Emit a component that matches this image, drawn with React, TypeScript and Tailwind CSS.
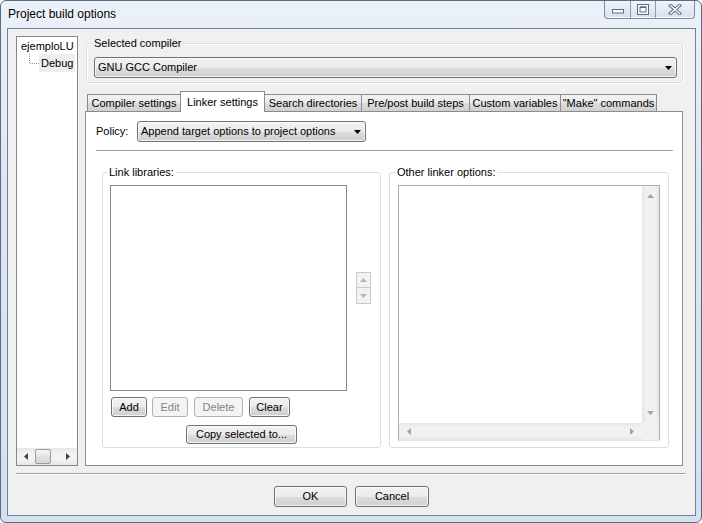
import clsx from "clsx";

// Win7 button face, reused by buttons and read-only combos
const face =
  "border border-[#707070] rounded-[3px] bg-[linear-gradient(#f2f2f2_0%,#ebebeb_50%,#dddddd_51%,#cfcfcf_100%)] shadow-[inset_0_0_0_1px_rgba(255,255,255,0.75)]";

type Dir = "up" | "down" | "left" | "right";

function Tri({ dir, className }: { dir: Dir; className?: string }) {
  const vertical = dir === "up" || dir === "down";
  const pts = {
    down: "0,0 7,0 3.5,4",
    up: "0,4 7,4 3.5,0",
    left: "4,0 4,7 0,3.5",
    right: "0,0 0,7 4,3.5",
  }[dir];
  return (
    <svg
      width={vertical ? 7 : 4}
      height={vertical ? 4 : 7}
      viewBox={vertical ? "0 0 7 4" : "0 0 4 7"}
      className={className}
    >
      <polygon points={pts} fill="currentColor" />
    </svg>
  );
}

function Btn({
  children,
  className,
  disabled,
}: {
  children: React.ReactNode;
  className?: string;
  disabled?: boolean;
}) {
  return (
    <div
      className={clsx(
        "flex items-center justify-center whitespace-nowrap",
        disabled
          ? "border border-[#adb2b5] rounded-[3px] bg-[#f4f4f4] text-[#838383]"
          : face,
        className
      )}
    >
      {children}
    </div>
  );
}

function Combo({ text, className }: { text: string; className?: string }) {
  return (
    <div className={clsx(face, "flex items-center h-[21px] pl-[3px] pr-[4px]", className)}>
      <span className="flex-1 whitespace-nowrap overflow-hidden">{text}</span>
      <Tri dir="down" className="text-black" />
    </div>
  );
}

function Tab({
  label,
  className,
}: {
  label: string;
  className?: string;
}) {
  return (
    <div
      className={clsx(
        "h-[17px] flex items-center justify-center whitespace-nowrap border-t border-[#898c95] bg-[linear-gradient(#f2f2f2_0%,#ebebeb_50%,#dddddd_51%,#cfcfcf_100%)]",
        className
      )}
    >
      {label}
    </div>
  );
}

function TitleControls() {
  return (
    <div className="mr-[6px] flex h-[18px] w-[91px] rounded-b-[4px] border border-t-0 border-[#7d8ca0] bg-[linear-gradient(#f1f5fb_0%,#e3ebf5_50%,#d6e1ee_100%)] shadow-[inset_0_-1px_0_rgba(255,255,255,0.8)]">
      <div className="w-[25px] flex items-end justify-center pb-[4px]">
        <svg width="12" height="5" viewBox="0 0 12 5">
          <rect x="0.5" y="0.5" width="11" height="3.5" fill="#fff" stroke="#5f6c7e" />
        </svg>
      </div>
      <div className="w-[25px] border-l border-[#8d9cb0] flex items-center justify-center">
        <svg width="12" height="11" viewBox="0 0 12 11">
          <rect x="0.5" y="0.5" width="11" height="10" fill="#fff" stroke="#5f6c7e" />
          <rect x="3" y="3" width="6" height="5" fill="none" stroke="#5f6c7e" />
          <rect x="3" y="2.5" width="6" height="1.5" fill="#5f6c7e" />
        </svg>
      </div>
      <div className="flex-1 border-l border-[#8d9cb0] flex items-center justify-center">
        <svg width="14" height="11" viewBox="0 0 14 11">
          <path d="M2.5 1.5 L11.5 9.5 M11.5 1.5 L2.5 9.5" stroke="#5f6c7e" strokeWidth="3.4" strokeLinecap="square" />
          <path d="M2.5 1.5 L11.5 9.5 M11.5 1.5 L2.5 9.5" stroke="#fff" strokeWidth="1.4" strokeLinecap="square" />
        </svg>
      </div>
    </div>
  );
}

function TreePanel() {
  return (
    <div className="w-[62px] h-[430px] border border-[#828790] bg-white flex flex-col">
      <div className="pt-[1px]">
        <div className="h-[16px] pl-[4px] flex items-center whitespace-nowrap">ejemploLU</div>
        <div className="h-[18px] flex items-stretch">
          <svg width="22" height="18" viewBox="0 0 22 18" className="shrink-0">
            <path d="M12.5 0 V9.5 H22" fill="none" stroke="#9a9a9a" strokeDasharray="1 1" />
          </svg>
          <div className="w-[36px] pl-[2px] bg-[#eeeeee] flex items-center">Debug</div>
        </div>
      </div>
      <div className="flex-1" />
      <div className="h-[17px] bg-[linear-gradient(#e6e6e6,#f2f2f2_30%,#f2f2f2_70%,#e6e6e6)] flex items-center">
        <div className="w-[17px] flex justify-center text-[#404040]">
          <Tri dir="left" />
        </div>
        <div className="ml-[1px] w-[16px] h-[15px] rounded-[2px] border border-[#9b9b9b] bg-[linear-gradient(#f6f6f6,#e2e2e2_50%,#d6d6d6)]" />
        <div className="flex-1 flex justify-center pl-[8px] text-[#404040]">
          <Tri dir="right" />
        </div>
      </div>
    </div>
  );
}

function LinkLibraries() {
  return (
    <fieldset className="w-[279px] border border-[#d5dfe5] rounded-[3px] pl-[7px] pr-[7px] pb-[3px]">
      <legend className="ml-[-3px] px-[2px] leading-[14px]">Link libraries:</legend>
      <div className="mt-[6px] flex items-center">
        <div className="w-[237px] h-[206px] border border-[#828790] bg-white" />
        <div className="ml-[9px] flex flex-col">
          <div className="w-[15px] h-[16px] border border-[#c9c9c9] bg-[#f2f2f2] flex items-center justify-center text-[#b5b5b5]">
            <Tri dir="up" />
          </div>
          <div className="w-[15px] h-[16px] border border-t-0 border-[#c9c9c9] bg-[#f2f2f2] flex items-center justify-center text-[#b5b5b5]">
            <Tri dir="down" />
          </div>
        </div>
      </div>
      <div className="mt-[6px] ml-[1px] flex h-[20px]">
        <Btn className="w-[36px]">Add</Btn>
        <Btn className="w-[36px] ml-[5px]" disabled>
          Edit
        </Btn>
        <Btn className="w-[49px] ml-[6px]" disabled>
          Delete
        </Btn>
        <Btn className="w-[41px] ml-[6px]">Clear</Btn>
      </div>
      <div className="mt-[8px] flex justify-center">
        <Btn className="w-[111px] h-[19px]">Copy selected to...</Btn>
      </div>
    </fieldset>
  );
}

function OtherLinker() {
  return (
    <fieldset className="w-[280px] border border-[#d5dfe5] rounded-[3px] pl-[8px] pb-[6px]">
      <legend className="ml-[-3px] px-[2px] leading-[14px]">Other linker options:</legend>
      <div className="mt-[6px] w-[262px] h-[256px] border border-[#abadb3] border-b-[#e3e9ef] bg-white grid grid-cols-[1fr_17px] grid-rows-[1fr_17px]">
        <div className="bg-white" />
        <div className="bg-[linear-gradient(90deg,#e6e6e6,#f1f1f1_25%,#f1f1f1_75%,#e6e6e6)] flex flex-col items-center justify-between py-[8px] text-[#a3a3a3]">
          <Tri dir="up" />
          <Tri dir="down" />
        </div>
        <div className="bg-[linear-gradient(#e6e6e6,#f1f1f1_25%,#f1f1f1_75%,#e6e6e6)] flex items-center justify-between px-[8px] text-[#a3a3a3]">
          <Tri dir="left" />
          <Tri dir="right" />
        </div>
        <div className="bg-[#f0f0f0]" />
      </div>
    </fieldset>
  );
}

function LinkerPanel() {
  return (
    <div className="h-[355px] border border-[#898c95] bg-white flex flex-col">
      <div className="mt-[9px] ml-[10px] flex items-center h-[21px]">
        <span className="w-[41px]">Policy:</span>
        <Combo className="w-[229px]" text="Append target options to project options" />
      </div>
      <div className="mt-[8px] ml-[10px] mr-[9px] h-px bg-[#a0a0a0]" />
      <div className="mt-[14px] ml-[16px] flex items-start gap-[8px]">
        <LinkLibraries />
        <OtherLinker />
      </div>
    </div>
  );
}

export default function App() {
  return (
    <div className="w-[702px] h-[523px] rounded-[6px] border border-[#5c6b7e] bg-[linear-gradient(180deg,#eaf1f9_0%,#dde7f3_35%,#d3e0ef_100%)] flex flex-col font-['Liberation_Sans',Arial,sans-serif] text-[11px] text-black overflow-hidden">
      {/* Title bar */}
      <div className="h-[27px] flex items-start">
        <span className="pl-[7px] mt-[5px] text-[12px] leading-[16px] text-black [text-shadow:0_0_6px_#fff]">
          Project build options
        </span>
        <div className="flex-1" />
        <TitleControls />
      </div>

      {/* Client area */}
      <div className="ml-[6px] mr-[5px] mb-[6px] h-[488px] border border-[#75818f] bg-[#f0f0f0] flex flex-col">
        <div className="pt-[7px] pl-[8px] flex">
          <TreePanel />
          <div className="ml-[7px] w-[598px] flex flex-col">
            <fieldset className="ml-[1px] w-[597px] h-[47px] border border-[#d5dfe5] rounded-[3px] pl-[7px] shadow-[inset_1px_1px_0_#fff,1px_1px_0_#fff]">
              <legend className="ml-[-2px] px-[2px] leading-[14px] bg-[#f0f0f0]">Selected compiler</legend>
              <Combo className="mt-[7px] w-[583px]" text="GNU GCC Compiler" />
            </fieldset>

            {/* Tabs */}
            <div className="mt-[8px] h-[20px] pl-[2px] flex items-end relative z-10">
              <Tab className="w-[93px] border-l" label="Compiler settings" />
              <div className="w-[85px] h-[21px] -mb-px border border-b-0 border-[#898c95] bg-white flex items-center justify-center whitespace-nowrap">
                Linker settings
              </div>
              <Tab className="w-[96px]" label="Search directories" />
              <Tab className="w-[108px] border-l" label="Pre/post build steps" />
              <Tab className="w-[91px] border-l" label="Custom variables" />
              <Tab className="w-[97px] border-x" label={'"Make" commands'} />
            </div>
            <LinkerPanel />
          </div>
        </div>

        <div className="mt-[7px] ml-[8px] mr-[9px] h-[2px] border-t border-[#a0a0a0] border-b border-b-white" />

        <div className="mt-[11px] flex justify-center gap-[8px]">
          <Btn className="w-[73px] h-[21px]">OK</Btn>
          <Btn className="w-[74px] h-[21px]">Cancel</Btn>
        </div>
      </div>
    </div>
  );
}
